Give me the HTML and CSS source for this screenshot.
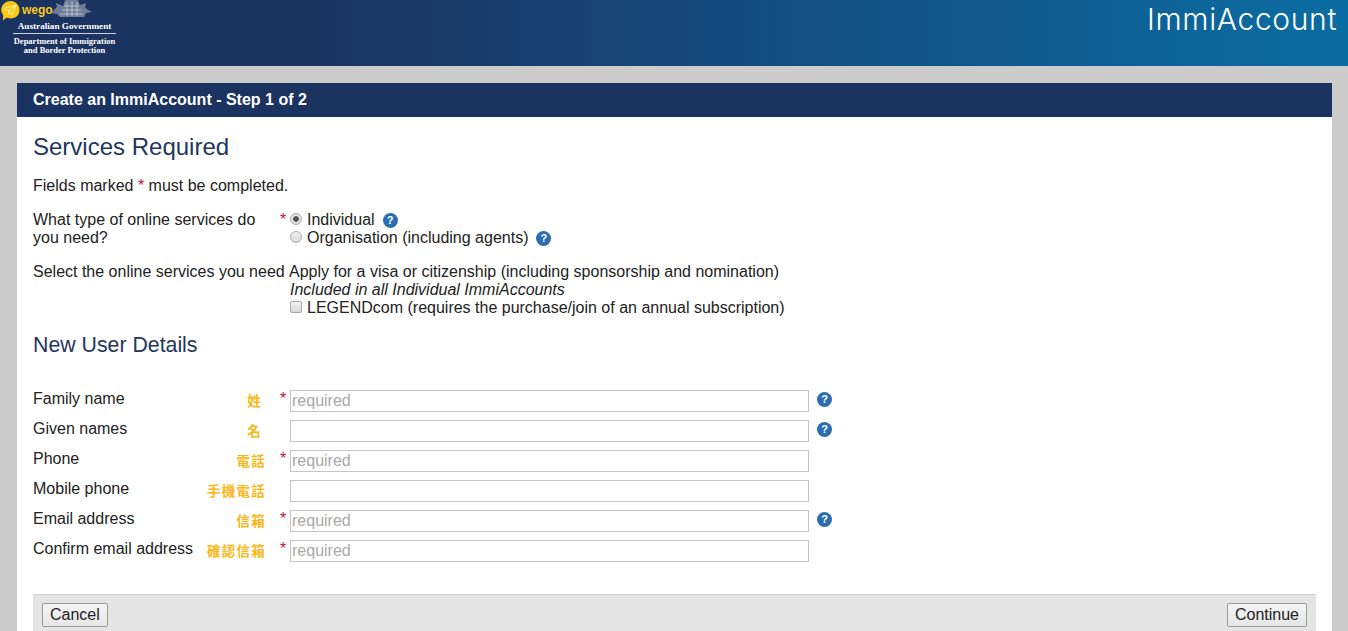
FILE: index.html
```html
<!DOCTYPE html>
<html lang="en">
  <head>
    <meta charset="UTF-8" />
    <title>Create an ImmiAccount - Step 1 of 2</title>
    <link rel="stylesheet" href="styles.css">
  </head>
  <body>
    <header class="site-header">
      <div class="brand">
        <svg class="crest" width="46" height="18" viewBox="0 0 46 18">
          <path d="M3 13 L9 7 L8 3 L15 6 L17 0 H30 L32 5 L38 3 L37 8 L44 12 L38 13 L36 17 H12 L9 14 Z" fill="#6f7d98" />
          <path d="M12 14 H35 M14 10 H33 M16 6 H31 M19 2 V16 M24 1 V16 M29 2 V16" stroke="#b9c1d0" stroke-width="1" fill="none" />
        </svg>
        <div class="wego">
          <svg width="20" height="21" viewBox="0 0 20 21">
            <path d="M10.5 1 C15.5 1 19.5 5 19.5 10 C19.5 15 15.5 18.5 10.5 18.5 C9 18.5 7.5 18.2 6.5 17.6 L3 20.5 L3.2 15.2 C2 13.7 1.2 12 1.2 10 C1.2 5 5.5 1 10.5 1 Z" fill="#fcc916" />
            <path d="M4 8.5 L16 5 L12 15 L9 11 Z M9 11 L16 5 M9 11 L9 14.5" fill="none" stroke="#fff3b8" stroke-width="0.9" />
          </svg>
          <span class="wego-name">wego</span>
        </div>
        <div class="gov-name">Australian Government</div>
        <div class="gov-dept">Department of Immigration<br />and Border Protection</div>
      </div>
      <div class="site-title">ImmiAccount</div>
    </header>

    <main class="panel">
      <h1 class="panel-title">Create an ImmiAccount - Step 1 of 2</h1>
      <div class="panel-body">
        <h2 class="section-title">Services Required</h2>
        <p class="note">Fields marked <span class="star">*</span> must be completed.</p>

        <div class="option-row">
          <div class="option-label">What type of online services do you need?</div>
          <div class="star">*</div>
          <div>
            <label class="choice">
              <input type="radio" name="kind" checked />Individual
              <span class="help">?</span>
            </label>
            <label class="choice">
              <input type="radio" name="kind" />Organisation (including agents)
              <span class="help">?</span>
            </label>
          </div>
        </div>

        <div class="option-row services">
          <div class="option-label wide">Select the online services you need</div>
          <div></div>
          <div>
            <div>Apply for a visa or citizenship (including sponsorship and nomination)</div>
            <div class="included">Included in all Individual ImmiAccounts</div>
            <label class="choice">
              <input type="checkbox" />LEGENDcom (requires the purchase/join of an annual subscription)
            </label>
          </div>
        </div>

        <h3 class="sub-title">New User Details</h3>

        <div class="fields">
          <div class="field">
            <label>Family name</label>
            <span class="hint one">姓</span>
            <span class="star">*</span>
            <input type="text" placeholder="required" />
            <span class="help">?</span>
          </div>
          <div class="field">
            <label>Given names</label>
            <span class="hint one">名</span>
            <span class="star"></span>
            <input type="text" />
            <span class="help">?</span>
          </div>
          <div class="field">
            <label>Phone</label>
            <span class="hint">電話</span>
            <span class="star">*</span>
            <input type="text" placeholder="required" />
          </div>
          <div class="field">
            <label>Mobile phone</label>
            <span class="hint">手機電話</span>
            <span class="star"></span>
            <input type="text" />
          </div>
          <div class="field">
            <label>Email address</label>
            <span class="hint">信箱</span>
            <span class="star">*</span>
            <input type="text" placeholder="required" />
            <span class="help">?</span>
          </div>
          <div class="field">
            <label>Confirm email address</label>
            <span class="hint">確認信箱</span>
            <span class="star">*</span>
            <input type="text" placeholder="required" />
          </div>
        </div>

        <div class="actions">
          <button type="button">Cancel</button>
          <button type="button">Continue</button>
        </div>
      </div>
    </main>
  </body>
</html>
```

FILE: styles.css
```css
/* ImmiAccount step 1 */
html,
body {
  height: 631px;
  overflow: hidden;
}
body {
  margin: 0;
  background-color: #cccccc;
  color: #222;
  font-family: "Liberation Sans", Arial, sans-serif;
  font-size: 16px;
  line-height: 18px;
}
.site-header {
  height: 66px;
  display: flex;
  justify-content: space-between;
  background: linear-gradient(to right, #1b3361 0%, #1b3361 22%, #0a6da3 100%);
}
.brand {
  position: relative;
  width: 132px;
  color: #fff;
  font-family: "Liberation Serif", serif;
  font-weight: bold;
  text-align: center;
}
.crest {
  position: absolute;
  left: 48px;
  top: 0;
}
.wego {
  position: absolute;
  left: 0;
  top: 0;
  display: flex;
  gap: 2px;
}
.wego-name {
  color: #fcc916;
  font-family: "Liberation Sans", sans-serif;
  font-size: 12px;
  line-height: 20px;
}
.gov-name {
  padding-top: 20px;
  font-size: 9.2px;
  line-height: 12px;
  width: 129px;
}
.gov-dept {
  width: 103px;
  margin: 1px 0 0 13px;
  padding-top: 3px;
  border-top: 1px solid #c9d0de;
  font-size: 8.5px;
  line-height: 9px;
}
.site-title {
  padding: 2px 11px 0 0;
  color: #fff;
  font-family: Inter, sans-serif;
  font-size: 30px;
  font-weight: 300;
  letter-spacing: 0.65px;
  line-height: 34px;
}
.panel {
  margin: 17px 16px 0 17px;
  background-color: #fff;
}
.panel-title {
  margin: 0;
  padding: 0 16px;
  background-color: #1b3361;
  color: #fff;
  font-size: 16px;
  line-height: 34px;
}
.panel-body {
  padding: 16px 16px 0;
}
.section-title {
  margin: 0;
  color: #1f3660;
  font-size: 24px;
  font-weight: normal;
  line-height: 28px;
}
.note {
  margin: 16px 0 0;
}
.star {
  color: #c2143a;
}
.option-row {
  display: grid;
  grid-template-columns: 247px 9px 1fr;
  margin-top: 16px;
}
.option-label {
  width: 235px;
}
.option-label.wide {
  width: auto;
  white-space: nowrap;
}
.included {
  padding-left: 1px;
  font-style: italic;
}
.choice {
  display: flex;
  align-items: center;
  padding-left: 1px;
}
.choice input {
  appearance: none;
  flex: none;
  width: 12px;
  height: 12px;
  margin: 0 5px 2px 0;
  border: 1px solid #a9a9a9;
  background: linear-gradient(#f2f2f2, #d8d8d8);
}
.choice input[type="radio"] {
  border-radius: 50%;
}
.choice input[type="radio"]:checked {
  background: radial-gradient(circle, #555 0 2.5px, #e4e4e4 3.2px);
}
.choice input[type="checkbox"] {
  border-radius: 2px;
}
.help {
  flex: none;
  width: 15px;
  height: 15px;
  margin-left: 8px;
  border-radius: 50%;
  background-color: #2a6db0;
  color: #fff;
  font-size: 11px;
  font-weight: bold;
  line-height: 15px;
  text-align: center;
}
.sub-title {
  margin: 16px 0 0;
  color: #1f3660;
  font-size: 21.3px;
  font-weight: normal;
  line-height: 24px;
}
.fields {
  margin-top: 33px;
}
.field {
  display: grid;
  grid-template-columns: 160px 73px 24px 519px auto;
  align-items: start;
  height: 30px;
}
.field label {
  white-space: nowrap;
}
.hint {
  color: #fbb614;
  font-family: "Noto Sans CJK TC", sans-serif;
  font-size: 13.5px;
  font-weight: 700;
  letter-spacing: 1.25px;
  line-height: 20px;
  text-align: right;
  white-space: nowrap;
}
.hint.one {
  padding-right: 4px;
}
.field .star {
  padding-left: 14px;
}
.field input {
  box-sizing: border-box;
  width: 519px;
  height: 22px;
  padding: 0 1px;
  border: 1px solid #c4c4c4;
  color: #222;
  font-family: "Liberation Sans", Arial, sans-serif;
  font-size: 16px;
}
.field input::placeholder {
  color: #a9a9a9;
  opacity: 1;
}
.field .help {
  margin: 2px 0 0 8px;
}
.actions {
  display: flex;
  justify-content: space-between;
  margin-top: 24px;
  padding: 8px 9px 10px;
  border-top: 1px solid #cfcfcf;
  background-color: #e4e4e4;
}
.actions button {
  height: 24px;
  padding: 0 7px;
  border: 1px solid #9a9a9a;
  border-radius: 2px;
  background: linear-gradient(#f4f4f4, #e6e6e6);
  color: #222;
  font-family: "Liberation Sans", Arial, sans-serif;
  font-size: 16px;
}
```
